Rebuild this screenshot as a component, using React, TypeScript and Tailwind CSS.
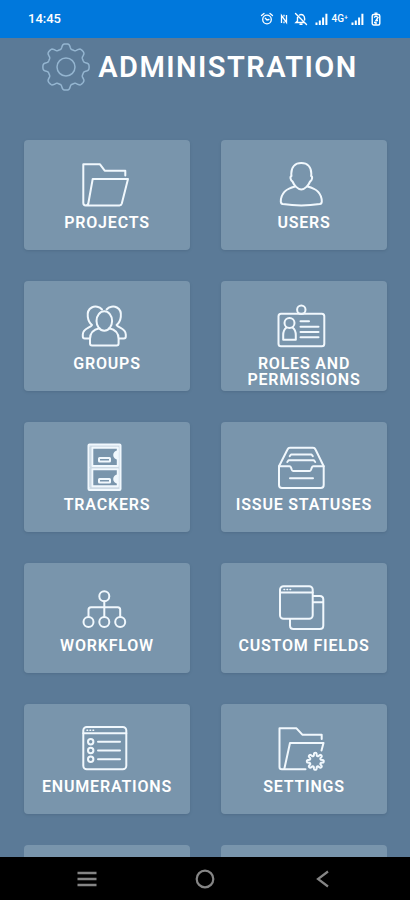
import type { ReactNode } from "react";

// closed outline of a cog with rounded teeth
function cogPath(cx: number, cy: number, mid: number, depth: number, teeth: number) {
  const points: string[] = [];
  for (let i = 0; i < 180; i++) {
    const a = (i / 180) * Math.PI * 2;
    const r = mid + depth * Math.tanh(2 * Math.cos(teeth * a));
    points.push(`${(cx + r * Math.sin(a)).toFixed(2)} ${(cy - r * Math.cos(a)).toFixed(2)}`);
  }
  return `M${points.join("L")}Z`;
}

function Icon({ children }: { children: ReactNode }) {
  return (
    <svg
      viewBox="0 0 48 48"
      className="w-12 h-12 mr-1 shrink-0 overflow-visible text-[#f1f8fd]"
      fill="none"
      stroke="currentColor"
      strokeWidth="2"
      strokeLinecap="round"
      strokeLinejoin="round"
      aria-hidden="true"
    >
      {children}
    </svg>
  );
}

const tiles: { label: string; icon: ReactNode }[] = [
  {
    label: "PROJECTS",
    icon: (
      <>
        <path d="M44.3 15.5V10.7H23.7L19 4.3H2.3V43q0 2.4 2.4 2.4H38.5q1.8 0 2.3-1.8L47 19H11.7L7.4 43q-.4 2.4-2.7 2.4" />
      </>
    ),
  },
  {
    label: "USERS",
    icon: (
      <>
        <path d="M23.3 3C17 3 13.3 7 13.3 13.5q0 1.5.2 2.5c-1.8.6-1 4.6 1 5.5 1.5 3.7 5.3 8 8.8 8s7.3-4.3 8.8-8c2-.9 2.8-4.9 1-5.5q.2-1 .2-2.5C33.3 7 29.6 3 23.3 3Z" />
        <path d="M17 26.5C9 28.5 3 32 2.8 41.5q0 2.2 2 2.6 18.5 2.6 37 0 2-.4 2-2.6C43.6 32 37.6 28.5 29.6 26.5" />
      </>
    ),
  },
  {
    label: "GROUPS",
    icon: (
      <>
        <ellipse cx="23.3" cy="20" rx="7.8" ry="9.7" />
        <path d="M18.5 27.3C12.5 28.5 9 32.5 9 38v4.5q0 2 2 2h24.6q2 0 2-2V38c0-5.5-3.5-9.5-9.5-10.7" />
        <path d="M21 8.5C18.5 5.5 14 4.8 10.7 6.5 7 8.5 6.3 12 6.8 15.8c.4 3.4 1.5 6 4.2 8.2-1.5 3-9.2 3.3-9.2 9.5v2q0 2 2 2H8.5" />
        <path d="M25.6 8.5C28.1 5.5 32.6 4.8 35.9 6.5c3.7 2 4.4 5.5 3.9 9.3-.4 3.4-1.5 6-4.2 8.2 1.5 3 9.2 3.3 9.2 9.5v2q0 2-2 2H38.1" />
      </>
    ),
  },
  {
    label: "ROLES AND PERMISSIONS",
    icon: (
      <>
        <rect x=".5" y="12.7" width="45.8" height="32.6" rx="2.5" />
        <circle cx="23.3" cy="8.7" r="4.2" />
        <circle cx="11.5" cy="22" r="5" />
        <path d="M8.5 26.5C6 28.5 5.2 31 5.2 34v4.7H17.8V34c0-3-.8-5.5-3.3-7.5" />
        <path d="M22.5 20.3h8.5M22.5 25.7h18M22.5 31h18M22.5 36.3h18" />
      </>
    ),
  },
  {
    label: "TRACKERS",
    icon: (
      <>
        <rect x="7.5" y="2.5" width="32" height="45.5" rx="1" />
        <path d="M9.5 4v42M37.8 4v42M9 4.2h29M9 46h29M9 25.6h29" strokeWidth="2.4" strokeOpacity=".7" />
        <rect x="11.3" y="5.7" width="25.5" height="18.3" />
        <rect x="11.3" y="27.3" width="25.5" height="17" />
        <rect x="18" y="16" width="11" height="3.6" rx=".5" />
        <rect x="18" y="37" width="11" height="3.6" rx=".5" />
        <path d="M36.8 9.5a3.6 3.6 0 0 0 0 7.2M36.8 33.5a3.6 3.6 0 0 0 0 7.2" fill="currentColor" />
      </>
    ),
  },
  {
    label: "ISSUE STATUSES",
    icon: (
      <>
        <path d="M1 24.3V43q0 3 3 3H42.7q3 0 3-3V24.3L37.5 7.5Q36.7 5.7 35 5.7H12Q10.3 5.7 9.5 7.5Z" />
        <path d="M1 24.3H11.5q1 0 1.4 1l1 2.7q.4 1 1.4 1H31.5q1 0 1.4-1l1-2.7q.4-1 1.4-1H45.7" />
        <path d="M11.7 14.2l1.3-1.7H33.5l1.3 1.7M9.3 20l1.4-1.8H35.8l1.4 1.8M12 36.3H35" />
      </>
    ),
  },
  {
    label: "WORKFLOW",
    icon: (
      <>
        <circle cx="23.3" cy="13.3" r="5" />
        <circle cx="7.5" cy="39" r="5" />
        <circle cx="23.3" cy="39" r="5" />
        <circle cx="39.2" cy="39" r="5" />
        <path d="M23.3 18.3V34M7.5 34V26.8q0-2.5 2.5-2.5H36.7q2.5 0 2.5 2.5V34" />
      </>
    ),
  },
  {
    label: "CUSTOM FIELDS",
    icon: (
      <>
        <rect x="2" y="3.3" width="32.7" height="32.4" rx="3.5" />
        <path d="M2 9.5H34.7" />
        <path d="M6 6.5h.6M9 6.5h.6M12 6.5h.6" strokeWidth="1.5" />
        <path d="M12 36v6.5q0 3.5 3.5 3.5H41.8q3.5 0 3.5-3.5V16.5q0-3.5-3.5-3.5H35M35 19.3H45.3" />
      </>
    ),
  },
  {
    label: "ENUMERATIONS",
    icon: (
      <>
        <rect x="2.3" y="3" width="43" height="42.3" rx="3.5" />
        <path d="M2.3 9.3h43" />
        <path d="M6 6.2h.6M9 6.2h.6M12 6.2h.6" strokeWidth="1.5" />
        <circle cx="9.7" cy="17.7" r="2.7" />
        <circle cx="9.7" cy="26.5" r="2.7" />
        <circle cx="9.7" cy="35.3" r="2.7" />
        <path d="M17 17.7H39M17 26.5H39M17 35.3H39" />
      </>
    ),
  },
  {
    label: "SETTINGS",
    icon: (
      <>
        <path d="M43.7 15V10.7H24.3L18.5 4.3H1.5V43q0 2.3 2.3 2.3H27.5" />
        <path d="M43.5 26.5L45.5 19H12L6.3 45" />
        <path d={cogPath(37.3, 37.3, 7, 1.5, 8)} />
      </>
    ),
  },
];

function SignalBars() {
  return (
    <svg viewBox="0 0 13 12" className="w-[13px] h-3" fill="currentColor" aria-hidden="true">
      <path d="M.5 9.5h2v2.500h-2zM3.800 7.500h2V12h-2zM7.100 4.500h2V12h-2zM10.400.800h2V12h-2z" />
    </svg>
  );
}

function StatusBar() {
  return (
    <div className="h-[38px] shrink-0 bg-[#0078dc] text-white flex items-center justify-between pl-7 pr-[29px]">
      <span className="text-[13px] font-medium">14:45</span>
      <div className="flex items-center gap-[3px]">
        <svg viewBox="0 0 14 14" className="w-3.5 h-3.5 mr-0.5" fill="none" stroke="currentColor" strokeWidth="1.3" strokeLinecap="round" aria-hidden="true">
          <circle cx="7" cy="7.5" r="4.3" />
          <path d="M1.5 3.5L4 1.5M12.5 3.5L10 1.5M5.3 6.3L7 8l2-.5" />
        </svg>
        <svg viewBox="0 0 10 14" className="w-2.5 h-3.5 mr-0.5" fill="none" stroke="currentColor" strokeWidth="1.3" aria-hidden="true">
          <path d="M2.5 11V3.5L7.5 10.5V3M5 2.8V4.5M5 9.5V11.2" />
        </svg>
        <svg viewBox="0 0 14 14" className="w-3.5 h-3.5 mr-1" fill="none" stroke="currentColor" strokeWidth="1.4" strokeLinecap="round" aria-hidden="true">
          <path d="M1.5 1.5L12.5 12.5M3.5 5.5V9L2 10.5H10M5.5 3Q7 2 9 3q1.6 1 1.6 3.5V8M6 12.3h2" />
        </svg>
        <SignalBars />
        <span className="text-[10px] leading-none font-medium">4G⁺</span>
        <SignalBars />
        <svg viewBox="0 0 10 14" className="w-2.5 h-3.5 ml-1" fill="none" stroke="currentColor" strokeWidth="1.4" aria-hidden="true">
          <path d="M3.5 1.2h3" />
          <rect x="1.2" y="2.5" width="7.6" height="10.5" rx="1.5" />
          <path d="M3 5.5l2-1.5 2 1.5-2 3H7M3 10.5h2v2" />
        </svg>
      </div>
    </div>
  );
}

function NavBar() {
  return (
    <nav className="h-[43px] shrink-0 bg-black text-[#858585] flex items-center justify-around px-7">
      <button type="button" aria-label="Recent apps" className="p-2">
        <svg viewBox="0 0 20 20" className="w-5 h-5" stroke="currentColor" strokeWidth="2.4" aria-hidden="true">
          <path d="M.5 4h19M.5 10h19M.5 16h19" />
        </svg>
      </button>
      <button type="button" aria-label="Home" className="p-2">
        <svg viewBox="0 0 20 20" className="w-5 h-5" fill="none" stroke="currentColor" strokeWidth="2.2" aria-hidden="true">
          <circle cx="10" cy="10" r="8.3" />
        </svg>
      </button>
      <button type="button" aria-label="Back" className="p-2">
        <svg viewBox="0 0 20 20" className="w-5 h-5" fill="none" stroke="currentColor" strokeWidth="2.2" aria-hidden="true">
          <path d="M15 2.5L5 10l10 7.5" />
        </svg>
      </button>
    </nav>
  );
}

export default function App() {
  return (
    <div className="h-screen flex flex-col bg-[#5b7a97] text-white font-['Roboto',sans-serif]">
      <StatusBar />
      <main className="flex-1 min-h-0 overflow-y-auto [scrollbar-width:none]">
        <header className="flex items-center justify-center gap-2 pt-[5px] pr-2.5">
          <svg viewBox="0 0 48 48" className="w-12 h-12 text-[#94b5d0]" fill="none" stroke="currentColor" strokeWidth="1.5" aria-hidden="true">
            <path d={cogPath(24, 24, 20.7, 2.5, 8)} />
            <circle cx="24" cy="24" r="9" />
          </svg>
          <h1 className="text-[29px] leading-9 font-semibold tracking-wider">ADMINISTRATION</h1>
        </header>

        <div className="grid grid-cols-2 gap-[31px] pt-[49px] pl-6 pr-[23px] pb-6">
          {tiles.map((tile) => (
            <button
              key={tile.label}
              type="button"
              className="h-[110px] flex flex-col items-center pt-5 rounded bg-[#7995ac] shadow shadow-slate-700/15"
            >
              <Icon>{tile.icon}</Icon>
              <span className="mt-[7px] px-2 text-base leading-4 font-semibold tracking-wider text-center">
                {tile.label}
              </span>
            </button>
          ))}
          <div className="h-[110px] rounded bg-[#7995ac]" />
          <div className="h-[110px] rounded bg-[#7995ac]" />
        </div>
      </main>
      <NavBar />
    </div>
  );
}
